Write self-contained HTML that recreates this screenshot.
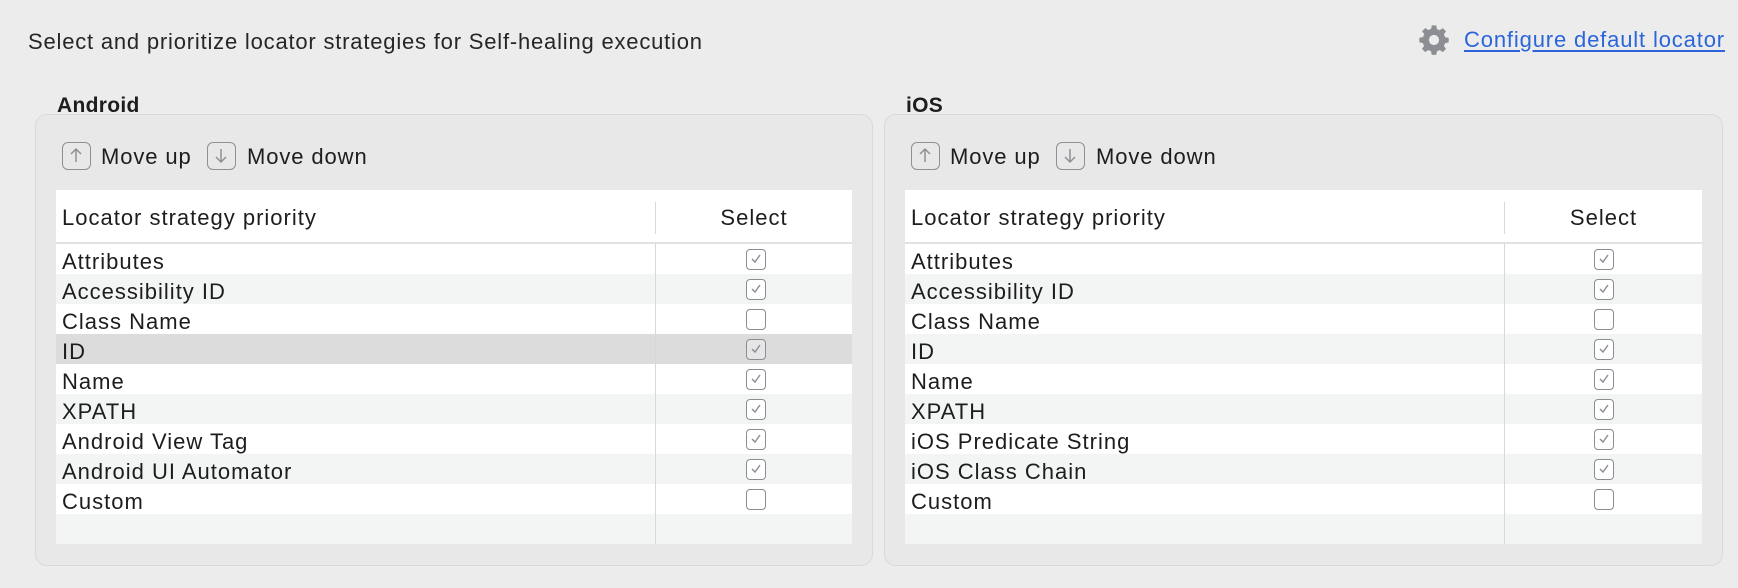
<!DOCTYPE html>
<html><head><meta charset="utf-8"><style>
*{box-sizing:border-box;margin:0;padding:0}
body{width:1738px;height:588px;background:#ececec;font-family:"Liberation Sans",sans-serif;color:#1d1d1d;position:relative;overflow:hidden}
.abs{position:absolute}
.hdr{left:28px;top:29px;font-size:22px;letter-spacing:0.8px;color:#262626}
.link{left:1464px;top:27px;font-size:22px;letter-spacing:0.85px;color:#2b65d9;text-decoration:underline;text-underline-offset:3px}
.gear{left:1418px;top:24px}
.title{font-size:21px;font-weight:bold;top:94px;letter-spacing:.3px}
.panel{top:114px;height:452px;border:1px solid #d9d9d9;border-radius:12px;background:#e8e8e8}
.btn{top:142px;width:29px;height:28px;border:1.5px solid #8e9096;border-radius:6px}
.btxt{top:144px;font-size:22px;letter-spacing:0.9px}
.table{top:190px;background:#fff}
.th{height:54px;border-bottom:2px solid #e2e2e2;position:relative;font-size:22px;letter-spacing:1px}
.row{height:30px;position:relative;font-size:22px;letter-spacing:1px}
.row:nth-child(even){background:#f3f4f4}
.row.sel{background:#dcdcdc}
.cell1{position:absolute;left:6px;top:5px}
.cb{position:absolute;top:5px;width:20px;height:21px;border:1.5px solid #8a8d93;border-radius:4px;background:#fff}
.row.sel .cb{background:#e6e6e6}
.cb svg{position:absolute;left:3px;top:3px}
.div{position:absolute;top:0;bottom:0;width:1px;background:#d8d8d8}
</style></head><body>
<div class="abs hdr">Select and prioritize locator strategies for Self-healing execution</div>
<svg class="abs gear" width="32" height="32" viewBox="0 0 24 24"><path fill="#8c8e93" d="M10.3 1h3.4l.5 2.8a8.5 8.5 0 0 1 2.1.9l2.3-1.6 2.4 2.4-1.6 2.3c.4.7.7 1.4.9 2.1l2.7.5v3.4l-2.7.5a8.5 8.5 0 0 1-.9 2.1l1.6 2.3-2.4 2.4-2.3-1.6a8.5 8.5 0 0 1-2.1.9l-.5 2.8h-3.4l-.5-2.8a8.5 8.5 0 0 1-2.1-.9l-2.3 1.6-2.4-2.4 1.6-2.3a8.5 8.5 0 0 1-.9-2.1L1 13.7v-3.4l2.8-.5c.2-.7.5-1.4.9-2.1L3.1 5.4l2.4-2.4 2.3 1.6c.7-.4 1.4-.7 2.1-.9zM12 8.2a3.8 3.8 0 1 0 0 7.6 3.8 3.8 0 0 0 0-7.6z"/></svg>
<div class="abs link">Configure default locator</div>

<!-- Android -->
<div class="abs title" style="left:57px">Android</div>
<div class="abs panel" style="left:35px;width:838px"></div>
<div class="abs btn" style="left:62px"><svg width="26" height="25" viewBox="0 0 26 25"><path d="M13 19V6M8 11l5-5 5 5" stroke="#8e9096" stroke-width="1.5" fill="none"/></svg></div>
<div class="abs btxt" style="left:101px">Move up</div>
<div class="abs btn" style="left:207px"><svg width="26" height="25" viewBox="0 0 26 25"><path d="M13 6v13M8 14l5 5 5-5" stroke="#8e9096" stroke-width="1.5" fill="none"/></svg></div>
<div class="abs btxt" style="left:247px">Move down</div>
<div class="abs table" style="left:56px;width:796px">
 <div class="th"><span class="cell1" style="top:15px">Locator strategy priority</span><span style="position:absolute;left:600px;width:196px;text-align:center;top:15px">Select</span><div style="position:absolute;left:599px;top:12px;height:32px;width:1px;background:#d8d8d8"></div></div>
 <div style="position:relative">
  <div class="row"><span class="cell1">Attributes</span><span class="cb" style="left:690px"><svg width="12" height="12"><path d="M2 6l3 3 5-7" stroke="#8a8d93" stroke-width="1.4" fill="none"/></svg></span></div>
  <div class="row"><span class="cell1">Accessibility ID</span><span class="cb" style="left:690px"><svg width="12" height="12"><path d="M2 6l3 3 5-7" stroke="#8a8d93" stroke-width="1.4" fill="none"/></svg></span></div>
  <div class="row"><span class="cell1">Class Name</span><span class="cb" style="left:690px"></span></div>
  <div class="row sel"><span class="cell1">ID</span><span class="cb" style="left:690px"><svg width="12" height="12"><path d="M2 6l3 3 5-7" stroke="#8a8d93" stroke-width="1.4" fill="none"/></svg></span></div>
  <div class="row"><span class="cell1">Name</span><span class="cb" style="left:690px"><svg width="12" height="12"><path d="M2 6l3 3 5-7" stroke="#8a8d93" stroke-width="1.4" fill="none"/></svg></span></div>
  <div class="row"><span class="cell1">XPATH</span><span class="cb" style="left:690px"><svg width="12" height="12"><path d="M2 6l3 3 5-7" stroke="#8a8d93" stroke-width="1.4" fill="none"/></svg></span></div>
  <div class="row"><span class="cell1">Android View Tag</span><span class="cb" style="left:690px"><svg width="12" height="12"><path d="M2 6l3 3 5-7" stroke="#8a8d93" stroke-width="1.4" fill="none"/></svg></span></div>
  <div class="row"><span class="cell1">Android UI Automator</span><span class="cb" style="left:690px"><svg width="12" height="12"><path d="M2 6l3 3 5-7" stroke="#8a8d93" stroke-width="1.4" fill="none"/></svg></span></div>
  <div class="row"><span class="cell1">Custom</span><span class="cb" style="left:690px"></span></div>
  <div class="row"></div>
  <div class="div" style="left:599px"></div>
 </div>
</div>

<!-- iOS -->
<div class="abs title" style="left:906px">iOS</div>
<div class="abs panel" style="left:884px;width:839px"></div>
<div class="abs btn" style="left:911px"><svg width="26" height="25" viewBox="0 0 26 25"><path d="M13 19V6M8 11l5-5 5 5" stroke="#8e9096" stroke-width="1.5" fill="none"/></svg></div>
<div class="abs btxt" style="left:950px">Move up</div>
<div class="abs btn" style="left:1056px"><svg width="26" height="25" viewBox="0 0 26 25"><path d="M13 6v13M8 14l5 5 5-5" stroke="#8e9096" stroke-width="1.5" fill="none"/></svg></div>
<div class="abs btxt" style="left:1096px">Move down</div>
<div class="abs table" style="left:905px;width:797px">
 <div class="th"><span class="cell1" style="top:15px">Locator strategy priority</span><span style="position:absolute;left:600px;width:197px;text-align:center;top:15px">Select</span><div style="position:absolute;left:599px;top:12px;height:32px;width:1px;background:#d8d8d8"></div></div>
 <div style="position:relative">
  <div class="row"><span class="cell1">Attributes</span><span class="cb" style="left:689px"><svg width="12" height="12"><path d="M2 6l3 3 5-7" stroke="#8a8d93" stroke-width="1.4" fill="none"/></svg></span></div>
  <div class="row"><span class="cell1">Accessibility ID</span><span class="cb" style="left:689px"><svg width="12" height="12"><path d="M2 6l3 3 5-7" stroke="#8a8d93" stroke-width="1.4" fill="none"/></svg></span></div>
  <div class="row"><span class="cell1">Class Name</span><span class="cb" style="left:689px"></span></div>
  <div class="row"><span class="cell1">ID</span><span class="cb" style="left:689px"><svg width="12" height="12"><path d="M2 6l3 3 5-7" stroke="#8a8d93" stroke-width="1.4" fill="none"/></svg></span></div>
  <div class="row"><span class="cell1">Name</span><span class="cb" style="left:689px"><svg width="12" height="12"><path d="M2 6l3 3 5-7" stroke="#8a8d93" stroke-width="1.4" fill="none"/></svg></span></div>
  <div class="row"><span class="cell1">XPATH</span><span class="cb" style="left:689px"><svg width="12" height="12"><path d="M2 6l3 3 5-7" stroke="#8a8d93" stroke-width="1.4" fill="none"/></svg></span></div>
  <div class="row"><span class="cell1">iOS Predicate String</span><span class="cb" style="left:689px"><svg width="12" height="12"><path d="M2 6l3 3 5-7" stroke="#8a8d93" stroke-width="1.4" fill="none"/></svg></span></div>
  <div class="row"><span class="cell1">iOS Class Chain</span><span class="cb" style="left:689px"><svg width="12" height="12"><path d="M2 6l3 3 5-7" stroke="#8a8d93" stroke-width="1.4" fill="none"/></svg></span></div>
  <div class="row"><span class="cell1">Custom</span><span class="cb" style="left:689px"></span></div>
  <div class="row"></div>
  <div class="div" style="left:599px"></div>
 </div>
</div>
</body></html>
